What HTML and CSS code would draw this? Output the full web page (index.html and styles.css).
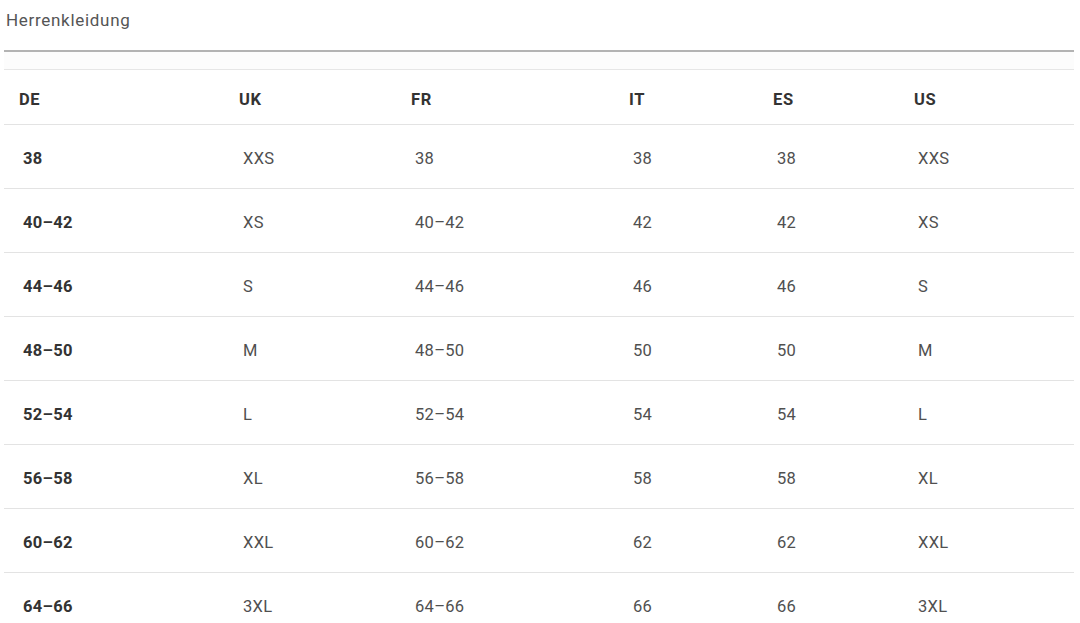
FILE: index.html
```html
<!DOCTYPE html>
<html lang="de">
<head>
<meta charset="utf-8">
<title>Herrenkleidung</title>
<link rel="stylesheet" href="styles.css">
</head>
<body>
<div class="page">
  <div class="title">Herrenkleidung</div>
  <div class="rule"></div>
  <div class="band"></div>
  <div class="table">
    <div class="row head">
      <div class="cell">DE</div><div class="cell">UK</div><div class="cell">FR</div><div class="cell">IT</div><div class="cell">ES</div><div class="cell">US</div>
    </div>
    <div class="row"><div class="cell de">38</div><div class="cell">XXS</div><div class="cell">38</div><div class="cell">38</div><div class="cell">38</div><div class="cell">XXS</div></div>
    <div class="row"><div class="cell de">40–42</div><div class="cell">XS</div><div class="cell">40–42</div><div class="cell">42</div><div class="cell">42</div><div class="cell">XS</div></div>
    <div class="row"><div class="cell de">44–46</div><div class="cell">S</div><div class="cell">44–46</div><div class="cell">46</div><div class="cell">46</div><div class="cell">S</div></div>
    <div class="row"><div class="cell de">48–50</div><div class="cell">M</div><div class="cell">48–50</div><div class="cell">50</div><div class="cell">50</div><div class="cell">M</div></div>
    <div class="row"><div class="cell de">52–54</div><div class="cell">L</div><div class="cell">52–54</div><div class="cell">54</div><div class="cell">54</div><div class="cell">L</div></div>
    <div class="row"><div class="cell de">56–58</div><div class="cell">XL</div><div class="cell">56–58</div><div class="cell">58</div><div class="cell">58</div><div class="cell">XL</div></div>
    <div class="row"><div class="cell de">60–62</div><div class="cell">XXL</div><div class="cell">60–62</div><div class="cell">62</div><div class="cell">62</div><div class="cell">XXL</div></div>
    <div class="row"><div class="cell de">64–66</div><div class="cell">3XL</div><div class="cell">64–66</div><div class="cell">66</div><div class="cell">66</div><div class="cell">3XL</div></div>
  </div>
</div>
</body>
</html>
```
FILE: styles.css
```css
html, body {
  margin: 0;
  padding: 0;
  background: #ffffff;
}
.page {
  width: 1070px;
  padding-left: 4px;
  font-family: Roboto, "Liberation Sans", sans-serif;
  color: #4a4a4a;
}
.title {
  height: 50px;
  box-sizing: border-box;
  padding: 9px 0 0 2px;
  font-size: 17px;
  line-height: 22px;
  letter-spacing: 0.7px;
  color: #555555;
}
.rule {
  height: 2px;
  background: #b3b3b3;
}
.band {
  height: 17px;
  background: #fcfcfc;
  border-bottom: 1px solid #e6e6e6;
}
.table {
  display: flex;
  flex-direction: column;
}
.row {
  display: grid;
  grid-template-columns: 220px 172px 218px 144px 141px 175px;
  height: 64px;
  align-items: center;
  border-bottom: 1px solid #e3e3e3;
  box-sizing: border-box;
  padding-top: 4px;
}
.row.head {
  height: 55px;
  padding-top: 5px;
}
.cell {
  padding-left: 19px;
  font-size: 16.5px;
  letter-spacing: 0.3px;
  color: #505050;
  white-space: nowrap;
}
.row.head .cell {
  padding-left: 15px;
  font-weight: 700;
  color: #333333;
  font-size: 16.5px;
  letter-spacing: 0.6px;
}
.cell.de {
  font-weight: 700;
  color: #333333;
}
```
